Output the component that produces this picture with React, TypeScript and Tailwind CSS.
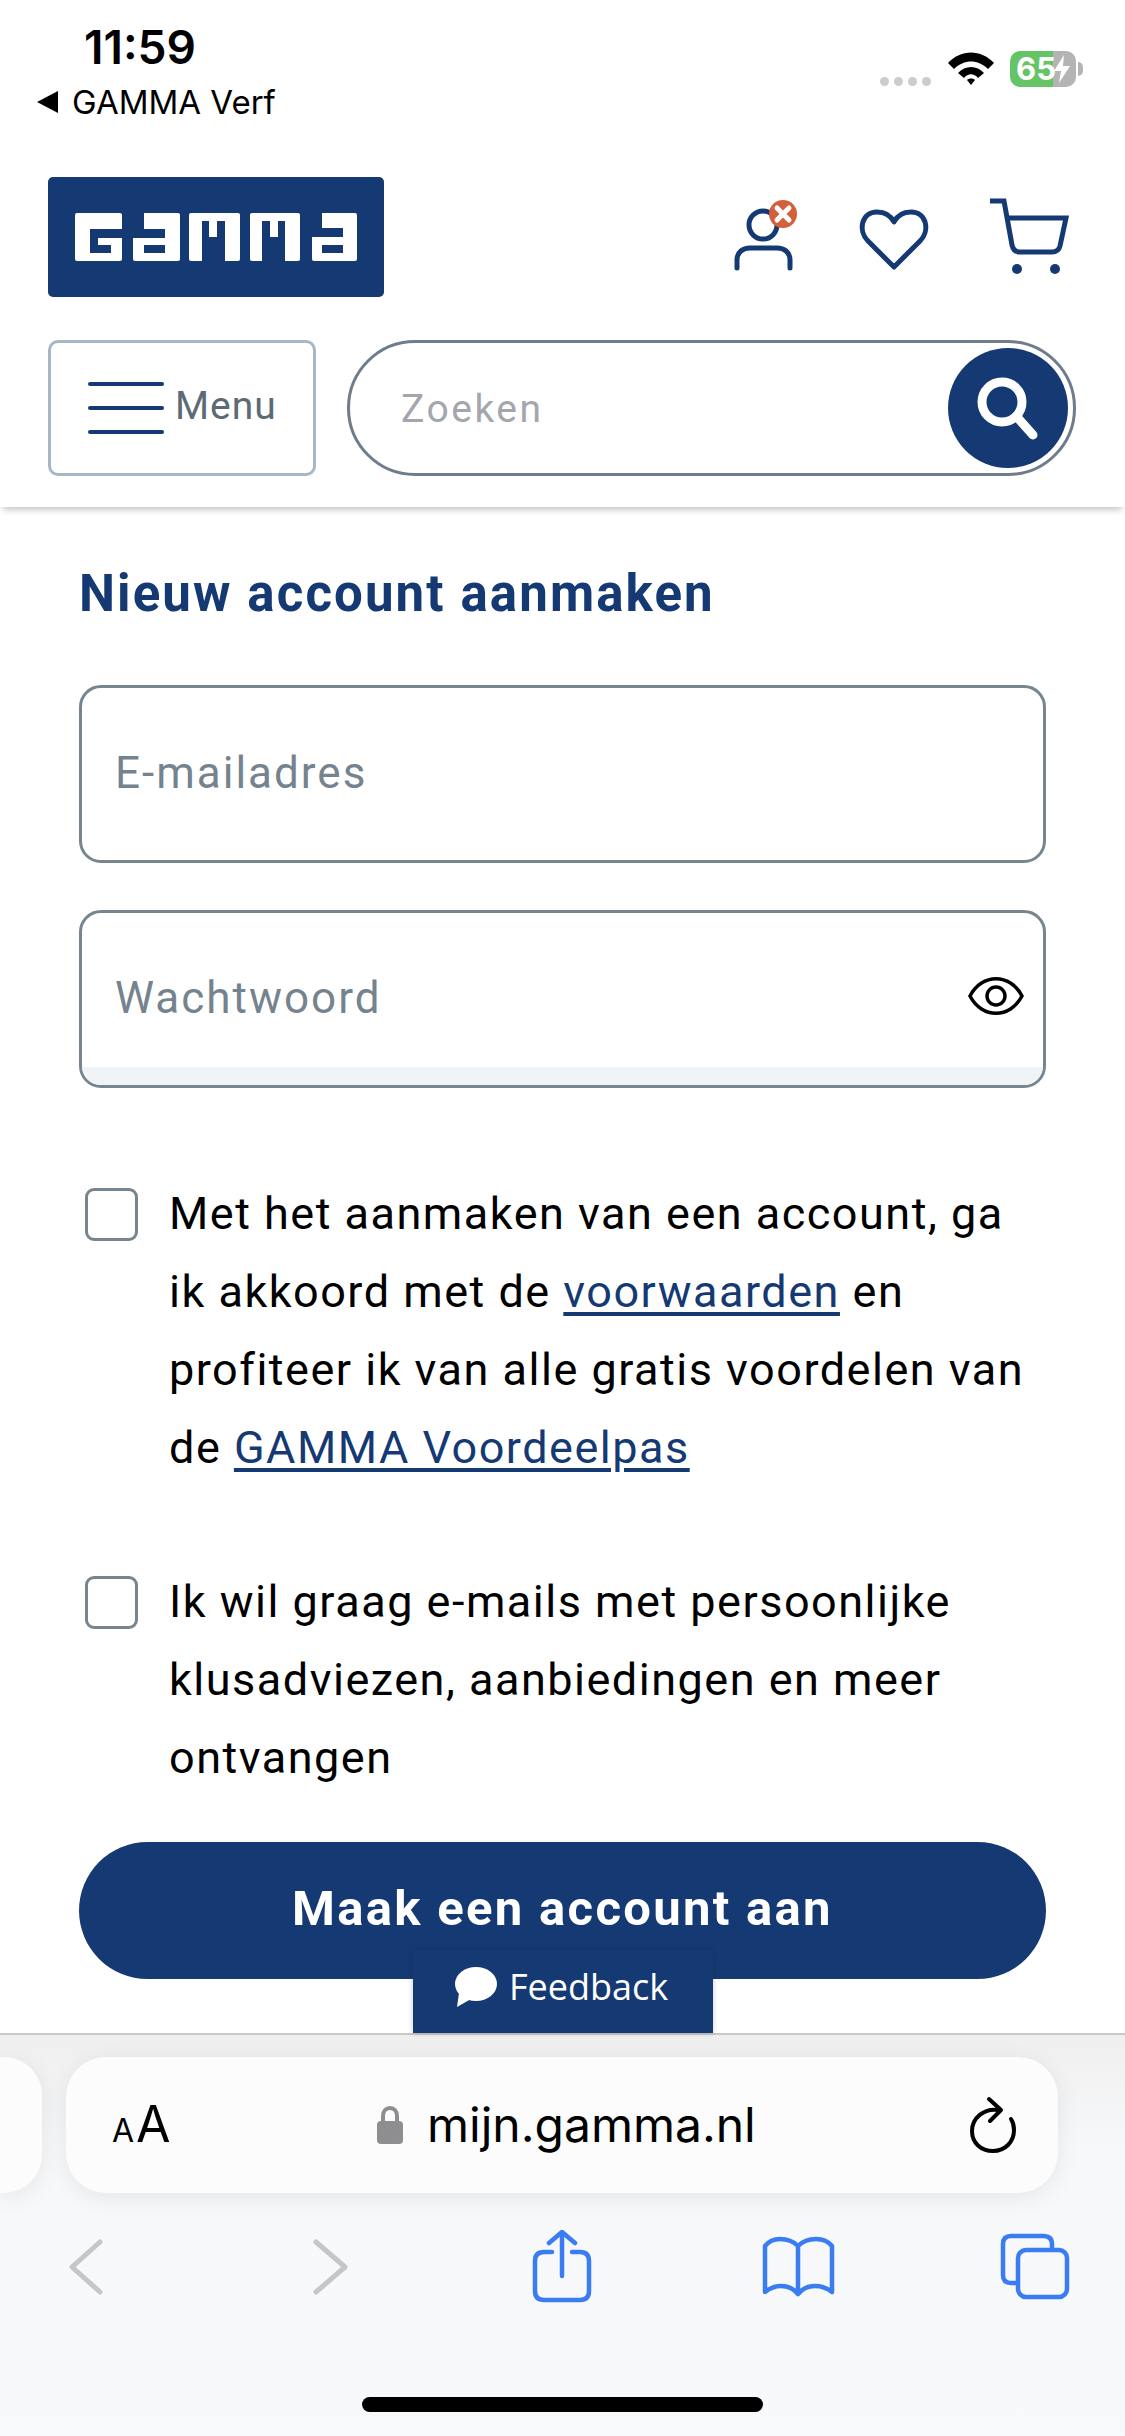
import React from 'react';

// GAMMA registration page as seen in iOS Safari
const navy = '#153a73';

function Logo() {
  return (
    <svg width="336" height="120" viewBox="48 177 336 120" className="block">
      <rect x="48" y="177" width="336" height="120" rx="5" fill={navy} />
      {/* G */}
      <rect x="75" y="213" width="47" height="48" rx="2" fill="#fff" />
      <path d="M122 229H90V253H111V245H98V238H122Z" fill={navy} />
      {/* a */}
      <rect x="133" y="213" width="47" height="48" rx="2" fill="#fff" />
      <path d="M133 213H144V229H165V238H144V245V253H165V245H144V238H133Z" fill={navy} />
      {/* m m */}
      <rect x="189" y="213" width="51" height="48" rx="2" fill="#fff" />
      <path d="M202 221H209V237H217V221H225V261H202Z" fill={navy} />
      <rect x="250" y="213" width="50" height="48" rx="2" fill="#fff" />
      <path d="M262 221H270V237H278V221H285V261H262Z" fill={navy} />
      {/* a */}
      <rect x="312" y="213" width="45" height="48" rx="2" fill="#fff" />
      <path d="M312 213H322V228H343V237H322V245V253H343V245H322V237H312Z" fill={navy} />
    </svg>
  );
}

function HeaderIcons() {
  return (
    <div className="flex items-center ml-auto">
      <svg width="70" height="85" viewBox="730 195 70 85" fill="none" stroke={navy} strokeWidth="5" strokeLinecap="round">
        <circle cx="763" cy="225" r="14" />
        <path d="M737 268V260C737 252 743 248 750 248H777C784 248 790 252 790 260V268" />
        <circle cx="783" cy="214" r="14" fill="#d2603a" stroke="none" />
        <path d="M777 208L789 220M789 208L777 220" stroke="#fff" strokeWidth="5" />
      </svg>
      <svg width="78" height="85" viewBox="855 195 78 85" fill="none" stroke={navy} strokeWidth="5" strokeLinejoin="round" className="ml-[55px]">
        <path d="M894 267L868 241C858 231 861 212 877 212C885 212 891 216 894 222C897 216 903 212 911 212C927 212 930 231 920 241Z" />
      </svg>
      <svg width="87" height="85" viewBox="985 195 87 85" fill="none" stroke={navy} strokeWidth="5" className="ml-[52px]">
        <path d="M990 201H1004L1012 245C1013 250 1016 252 1020 252H1052C1056 252 1059 250 1060 246L1066 218H1007" />
        <circle cx="1017" cy="269" r="5" fill={navy} stroke="none" />
        <circle cx="1055" cy="269" r="5" fill={navy} stroke="none" />
      </svg>
    </div>
  );
}

function CheckRow({ lines }: { lines: React.ReactNode }) {
  return (
    <div className="flex">
      <div className="ml-[6px] mt-[13px] w-[53px] h-[53px] shrink-0 rounded-[9px] border-[3px] border-[#77858f]" />
      <p className="ml-[31px] text-[45px] leading-[78px] tracking-[1.5px] text-black whitespace-nowrap">{lines}</p>
    </div>
  );
}

export default function App() {
  return (
    <div className="relative w-[1125px] h-[2436px] overflow-hidden bg-white flex flex-col font-['Roboto','Noto_Sans',sans-serif]">
      {/* status bar */}
      <div className="h-[177px] flex justify-between font-['Inter',sans-serif] text-black">
        <div className="pl-[84px] pt-[20px]">
          <div className="text-[46px] leading-[54px] font-semibold">11:59</div>
          <div className="-ml-[47px] mt-[8px] flex items-center">
            <svg width="21" height="22" viewBox="0 0 21 22">
              <path d="M21 0V22L0 11Z" fill="#000" />
            </svg>
            <span className="ml-[14px] text-[33px] leading-[40px]">GAMMA Verf</span>
          </div>
        </div>
        <div className="flex items-center h-[36px] mt-[51px] mr-[42px]">
          <div className="flex gap-[5px] mt-[24px]">
            <span className="w-[9px] h-[9px] rounded-full bg-[#cccccc]" />
            <span className="w-[9px] h-[9px] rounded-full bg-[#cccccc]" />
            <span className="w-[9px] h-[9px] rounded-full bg-[#cccccc]" />
            <span className="w-[9px] h-[9px] rounded-full bg-[#cccccc]" />
          </div>
          <svg width="46" height="34" viewBox="0 0 46 34" className="ml-[17px]">
            <path d="M0 11C13 -3 33 -3 46 11L40 17C30 7 16 7 6 17Z" fill="#000" />
            <path d="M10 21C17 13 29 13 36 21L30 26C26 21 20 21 16 26Z" fill="#000" />
            <path d="M19 28C21 26 25 26 27 28L23 33Z" fill="#000" />
          </svg>
          <div className="relative ml-[16px] w-[66px] h-[36px] rounded-[10px] overflow-hidden bg-[linear-gradient(90deg,#65c466_0,#65c466_43px,#b4b4b4_43px)] flex items-center">
            <span className="pl-[6px] text-[31px] leading-[36px] font-bold text-white">65</span>
            <svg width="16" height="28" viewBox="0 0 16 28" className="absolute right-[6px] top-[4px]">
              <path d="M10 0L0 16H7L5 28L16 11H9Z" fill="#fff" />
            </svg>
          </div>
          <div className="ml-[2px] w-[5px] h-[14px] rounded-r-full bg-[#b4b4b4]" />
        </div>
      </div>

      {/* header */}
      <header className="relative z-10 h-[330px] px-[48px] shadow-[0_6px_6px_-3px_rgba(0,0,0,0.22)]">
        <div className="flex items-center pr-[5px]">
          <Logo />
          <HeaderIcons />
        </div>
        <div className="mt-[43px] flex">
          <div className="w-[268px] h-[136px] rounded-[10px] border-[3px] border-[#a9b6c6] flex items-center pl-[37px]">
            <div className="flex flex-col gap-[20px] w-[76px]">
              <span className="h-[4px] rounded-full bg-[#153a73]" />
              <span className="h-[4px] rounded-full bg-[#153a73]" />
              <span className="h-[4px] rounded-full bg-[#153a73]" />
            </div>
            <span className="ml-[11px] mb-[4px] text-[39px] leading-[48px] tracking-[1px] text-[#5c6a76]">Menu</span>
          </div>
          <div className="ml-[31px] w-[729px] h-[136px] rounded-full border-[3px] border-[#6f7d8a] flex items-center pl-[51px] pr-[5px]">
            <span className="mt-[2px] text-[39px] leading-[48px] text-[#a3a7ad] tracking-[2.5px]">Zoeken</span>
            <div className="ml-auto w-[120px] h-[120px] rounded-full bg-[#153a73] flex items-center justify-center">
              <svg width="64" height="64" viewBox="0 0 64 64" fill="none" stroke="#fff" strokeWidth="9" strokeLinecap="round">
                <circle cx="26" cy="26" r="20" />
                <path d="M41 41L57 59" />
              </svg>
            </div>
          </div>
        </div>
      </header>

      {/* form */}
      <main className="relative flex-1 px-[79px]">
        <h1 className="mt-[57px] h-[60px] text-[51px] leading-[60px] font-bold tracking-[2.1px] text-[#153a73] whitespace-nowrap">Nieuw account aanmaken</h1>

        <div className="mt-[61px] h-[178px] rounded-[22px] border-[3px] border-[#77858f] flex items-center pl-[33px] pb-[3px]">
          <span className="text-[44px] leading-[50px] tracking-[2px] text-[#75838f]">E-mailadres</span>
        </div>
        <div className="relative mt-[47px] h-[178px] rounded-[22px] border-[3px] border-[#77858f] overflow-hidden flex items-center pl-[33px] pb-[3px]">
          <span className="text-[44px] leading-[50px] tracking-[2px] text-[#75838f]">Wachtwoord</span>
          <svg width="56" height="42" viewBox="0 0 56 42" fill="none" stroke="#000" strokeWidth="3.5" className="ml-auto mr-[19px] mb-[3px]">
            <path d="M2 21C14 -2 42 -2 54 21C42 44 14 44 2 21Z" />
            <circle cx="28" cy="21" r="9" />
          </svg>
          <div className="absolute left-0 right-0 bottom-0 h-[18px] bg-[#f0f4f7]" />
        </div>

        <div className="mt-[87px]">
          <CheckRow
            lines={
              <>
                Met het aanmaken van een account, ga
                <br />
                ik akkoord met de <a className="text-[#153a73] underline underline-offset-[5px]">voorwaarden</a> en
                <br />
                profiteer ik van alle gratis voordelen van
                <br />
                de <a className="text-[#153a73] underline underline-offset-[5px]">GAMMA Voordeelpas</a>
              </>
            }
          />
        </div>
        <div className="mt-[76px]">
          <CheckRow
            lines={
              <>
                Ik wil graag e-mails met persoonlijke
                <br />
                klusadviezen, aanbiedingen en meer
                <br />
                ontvangen
              </>
            }
          />
        </div>

        <button className="mt-[45px] w-full h-[137px] rounded-full bg-[#153a73] text-white text-[49px] leading-[60px] font-bold tracking-[2.3px] pb-[3px]">
          Maak een account aan
        </button>

        <div className="absolute left-[413px] bottom-0 w-[300px] h-[83px] bg-[#153a73] shadow-[0_0_6px_rgba(0,0,0,0.2)] flex items-center justify-center gap-[12px] pr-[5px] pb-[10px] font-['Open_Sans',sans-serif]">
          <svg width="44" height="40" viewBox="0 0 44 40">
            <ellipse cx="23" cy="17" rx="21" ry="17" fill="#fff" />
            <path d="M6 26L4 40L18 32Z" fill="#fff" />
          </svg>
          <span className="text-[36px] leading-[44px] text-white">Feedback</span>
        </div>
      </main>

      {/* safari toolbar */}
      <div className="h-[403px] border-t-2 border-[#c8c8c8] bg-[linear-gradient(180deg,#efeff0_0%,#f7f8f9_28%,#f7f9fb_100%)] font-['Inter',sans-serif]">
        <div className="mt-[22px] flex gap-[24px]">
          <div className="w-[42px] h-[136px] rounded-r-[38px] bg-[#fcfcfc] shadow-[0_4px_24px_rgba(0,0,0,0.08)]" />
          <div className="w-[992px] h-[136px] rounded-[40px] bg-[#fcfcfc] shadow-[0_4px_24px_rgba(0,0,0,0.08)] flex items-center pl-[46px] text-black">
            <div className="w-[265px] mt-[4px] flex items-baseline">
              <span className="text-[32px] leading-[40px]">A</span>
              <span className="ml-[2px] text-[50px] leading-[40px]">A</span>
            </div>
            <svg width="26" height="38" viewBox="0 0 26 38">
              <path d="M6 16V10C6 5 9 2 13 2C17 2 20 5 20 10V16" fill="none" stroke="#8e8e90" strokeWidth="4" />
              <rect x="0" y="15" width="26" height="23" rx="4" fill="#8e8e90" />
            </svg>
            <span className="ml-[24px] text-[48px] leading-[60px]">mijn.gamma.nl</span>
            <svg width="50" height="58" viewBox="968 2094 50 58" fill="none" stroke="#000" strokeWidth="4" strokeLinecap="round" strokeLinejoin="round" className="ml-auto mr-[40px]">
              <path d="M998 2108C984 2106 972 2116 972 2129C972 2141 981 2149 993 2149C1005 2149 1014 2140 1014 2128C1014 2124 1013 2120 1011 2117" />
              <path d="M989 2097L1001 2108L990 2119" />
            </svg>
          </div>
        </div>

        <div className="mt-[38px] h-[72px] flex items-center pl-[68px]">
          <svg width="36" height="56" viewBox="68 2240 36 56" fill="none" stroke="#c6c6c8" strokeWidth="5" strokeLinecap="round" strokeLinejoin="round">
            <path d="M100 2243L72 2268L100 2293" />
          </svg>
          <svg width="37" height="56" viewBox="312 2240 37 56" fill="none" stroke="#c6c6c8" strokeWidth="5" strokeLinecap="round" strokeLinejoin="round" className="ml-[208px]">
            <path d="M316 2243L345 2268L316 2293" />
          </svg>
          <svg width="62" height="74" viewBox="531 2230 62 74" fill="none" stroke="#3a7cf2" strokeWidth="4.5" strokeLinecap="round" strokeLinejoin="round" className="ml-[182px]">
            <path d="M552 2252H544C538 2252 535 2255 535 2261V2291C535 2297 538 2300 544 2300H580C586 2300 589 2297 589 2291V2261C589 2255 586 2252 580 2252H572" />
            <path d="M562 2276V2232M549 2243L562 2232L575 2243" />
          </svg>
          <svg width="75" height="62" viewBox="761 2237 75 62" fill="none" stroke="#3a7cf2" strokeWidth="4.5" strokeLinecap="round" strokeLinejoin="round" className="ml-[168px]">
            <path d="M798 2295V2247C793 2242 787 2240 780 2240C774 2240 769 2242 765 2247V2293C770 2289 775 2287 781 2287C788 2287 794 2290 798 2295C802 2290 808 2287 815 2287C821 2287 827 2289 832 2293V2247C828 2242 823 2240 816 2240C809 2240 803 2242 798 2247" />
          </svg>
          <svg width="72" height="68" viewBox="999 2234 72 68" fill="none" stroke="#3a7cf2" strokeWidth="4.5" strokeLinejoin="round" className="ml-[163px]">
            <path d="M1016 2284H1011C1005 2284 1003 2281 1003 2276V2245C1003 2240 1005 2237 1011 2237H1043C1049 2237 1052 2240 1052 2245V2250" />
            <rect x="1018" y="2251" width="49" height="47" rx="8" />
          </svg>
        </div>

        <div className="mt-[94px] mx-auto w-[401px] h-[15px] rounded-full bg-black" />
      </div>
    </div>
  );
}
